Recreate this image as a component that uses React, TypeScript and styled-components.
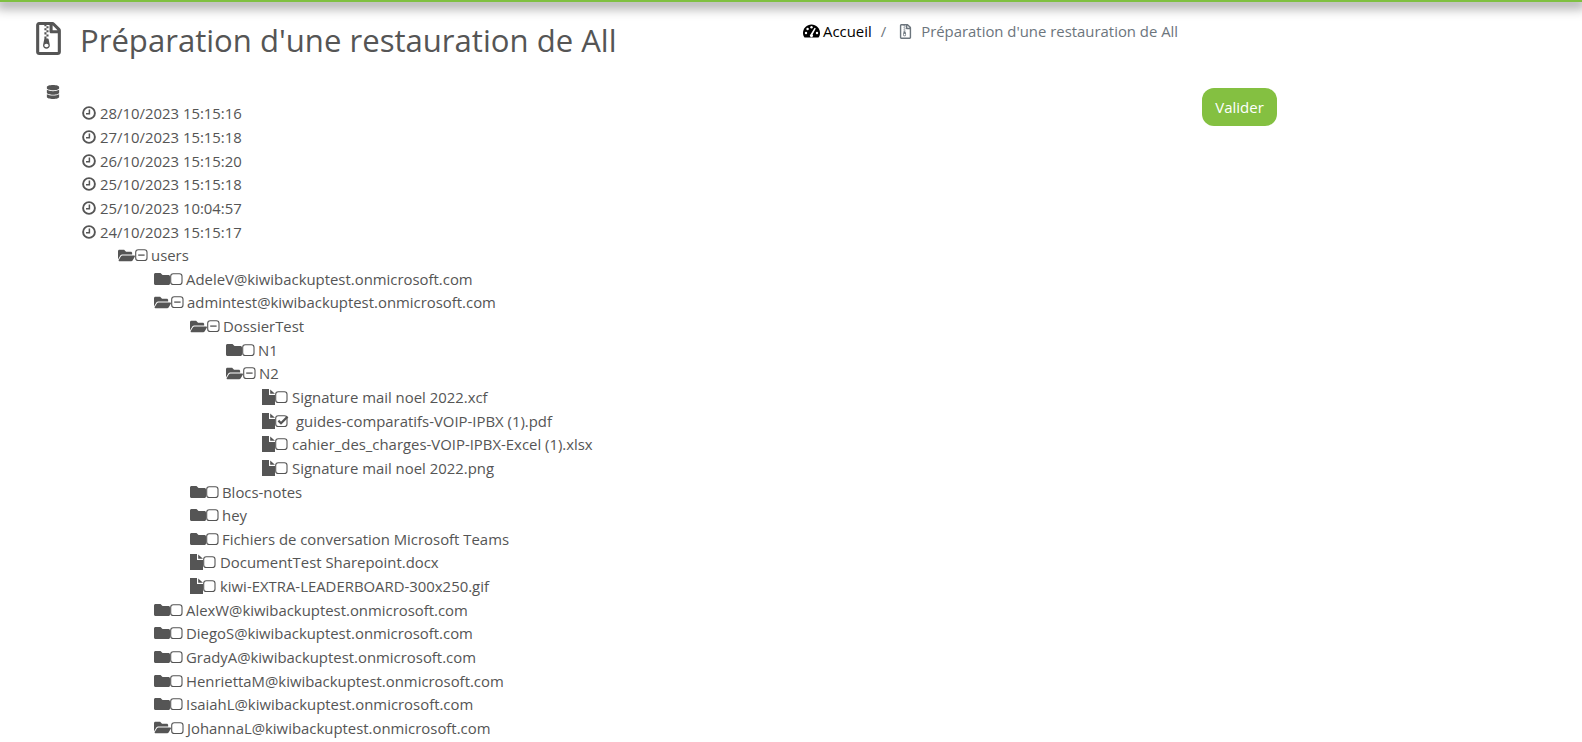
import React from "react";
import styled, { createGlobalStyle } from "styled-components";
import { FaDatabase, FaFolder, FaFolderOpen, FaRegFileArchive } from "react-icons/fa";

const GlobalStyle = createGlobalStyle`
  html, body {
    margin: 0;
    height: 100%;
    overflow: hidden;
    background: #fff;
    font-family: "Open Sans", "Liberation Sans", sans-serif;
    color: #555;
  }
`;

const TopBar = styled.div`
  height: 2px;
  background: #7fc041;
  box-shadow: 0 2px 12px 4px rgba(0, 0, 0, 0.38);
`;

const Header = styled.header`
  display: grid;
  grid-template-columns: 803px 1fr;
  padding-top: 20px;
  height: 61px;
`;

const TitleBlock = styled.div`
  display: flex;
  align-items: flex-start;
  padding-left: 35px;
  gap: 18px;
  color: #555;
  svg {
    width: 27px;
    height: 33px;
    flex: none;
  }
`;

const Title = styled.h1`
  margin: 1px 0 0;
  font-size: 31.1px;
  font-weight: 400;
  line-height: 34px;
`;

const Breadcrumb = styled.nav`
  display: flex;
  align-items: center;
  height: 18px;
  font-size: 14.9px;
  color: #6c757d;
`;

const HomeLink = styled.a`
  display: flex;
  align-items: center;
  gap: 3px;
  color: #000;
`;

const Separator = styled.span`
  margin: 0 12px 0 9px;
`;

const CrumbIcon = styled.span`
  display: flex;
  margin-right: 8px;
  color: #6c757d;
`;

const Main = styled.main`
  display: grid;
  grid-template-columns: 1202px 1fr;
`;

const TreeList = styled.ul<{ $root?: boolean }>`
  list-style: none;
  margin: 0;
  padding: 0 0 0 ${(p) => (p.$root ? 46 : 36)}px;
  font-size: 14.9px;
`;

const Row = styled.div<{ $root?: boolean }>`
  display: flex;
  align-items: center;
  height: ${(p) => (p.$root ? "18.5px" : "23.65px")};
  white-space: nowrap;
`;

const Icons = styled.span<{ $gap: number }>`
  display: inline-flex;
  align-items: center;
  margin-right: ${(p) => p.$gap}px;
  color: #555;
`;

const SubmitButton = styled.button`
  margin-top: 5px;
  width: 75px;
  height: 38px;
  border: none;
  border-radius: 12px;
  background: #84c041;
  color: #fff;
  font: inherit;
  font-size: 15px;
`;

const ClockIcon = () => (
  <svg width="14" height="14" viewBox="0 0 14 14" fill="none" stroke="currentColor">
    <circle cx="7" cy="7" r="5.9" strokeWidth="1.9" />
    <path d="M7.4 3.4V7.7H4" strokeWidth="1.5" />
  </svg>
);

const FileIcon = () => (
  <svg width="13" height="16" viewBox="0 0 13 16" fill="currentColor">
    <path d="M0 0H7V6H13V16H0Z" />
    <path d="M8.2 0.4L13 4.8H8.2Z" />
  </svg>
);

const GaugeIcon = () => (
  <svg width="17" height="14" viewBox="0 0 17 14">
    <path d="M8.5 0.5C3.8 0.5 0 4.3 0 9C0 10.8 0.5 12.3 1.5 13.5H15.5C16.5 12.3 17 10.8 17 9C17 4.3 13.2 0.5 8.5 0.5Z" fill="#000" />
    <g fill="#fff">
      <circle cx="3" cy="9" r="1.2" />
      <circle cx="4.6" cy="5" r="1.2" />
      <circle cx="8.5" cy="3.3" r="1.2" />
      <circle cx="14" cy="9" r="1.2" />
      <path d="M11.6 3.8L12.8 4.4L9.6 10.4A1.6 1.6 0 1 1 7.6 10.2Z" />
    </g>
  </svg>
);

const BoxIcon = ({ children, width = 13 }: { children?: React.ReactNode; width?: number }) => (
  <svg width={width} height="14" viewBox={`0 0 ${width} 14`} fill="none" stroke="currentColor">
    <rect x="0.7" y="1.7" width="11.3" height="10.8" rx="2.6" strokeWidth="1.1" />
    {children}
  </svg>
);

type Kind = "date" | "folder" | "open" | "file";
type Check = "none" | "empty" | "minus" | "check";

interface Node {
  label: string;
  kind: Kind;
  check: Check;
  children?: Node[];
}

const folder = (label: string): Node => ({ label, kind: "folder", check: "empty" });
const file = (label: string, check: Check = "empty"): Node => ({ label, kind: "file", check });
const date = (label: string, children?: Node[]): Node => ({ label, kind: "date", check: "none", children });

const tree: Node[] = [
  date("28/10/2023 15:15:16"),
  date("27/10/2023 15:15:18"),
  date("26/10/2023 15:15:20"),
  date("25/10/2023 15:15:18"),
  date("25/10/2023 10:04:57"),
  date("24/10/2023 15:15:17", [
    {
      label: "users",
      kind: "open",
      check: "minus",
      children: [
        folder("AdeleV@kiwibackuptest.onmicrosoft.com"),
        {
          label: "admintest@kiwibackuptest.onmicrosoft.com",
          kind: "open",
          check: "minus",
          children: [
            {
              label: "DossierTest",
              kind: "open",
              check: "minus",
              children: [
                folder("N1"),
                {
                  label: "N2",
                  kind: "open",
                  check: "minus",
                  children: [
                    file("Signature mail noel 2022.xcf"),
                    file("guides-comparatifs-VOIP-IPBX (1).pdf", "check"),
                    file("cahier_des_charges-VOIP-IPBX-Excel (1).xlsx"),
                    file("Signature mail noel 2022.png"),
                  ],
                },
              ],
            },
            folder("Blocs-notes"),
            folder("hey"),
            folder("Fichiers de conversation Microsoft Teams"),
            file("DocumentTest Sharepoint.docx"),
            file("kiwi-EXTRA-LEADERBOARD-300x250.gif"),
          ],
        },
        folder("AlexW@kiwibackuptest.onmicrosoft.com"),
        folder("DiegoS@kiwibackuptest.onmicrosoft.com"),
        folder("GradyA@kiwibackuptest.onmicrosoft.com"),
        folder("HenriettaM@kiwibackuptest.onmicrosoft.com"),
        folder("IsaiahL@kiwibackuptest.onmicrosoft.com"),
        { label: "JohannaL@kiwibackuptest.onmicrosoft.com", kind: "open", check: "empty" },
      ],
    },
  ]),
];

const KindIcon = ({ kind }: { kind: Kind }) => {
  if (kind === "date") return <ClockIcon />;
  if (kind === "folder") return <FaFolder size={16} />;
  if (kind === "open") return <FaFolderOpen size={17} />;
  return <FileIcon />;
};

const CheckIcon = ({ check }: { check: Check }) => {
  if (check === "minus")
    return (
      <BoxIcon>
        <path d="M3.2 7.1H9.6" strokeWidth="1.3" />
      </BoxIcon>
    );
  if (check === "check")
    return (
      <BoxIcon width={17}>
        <path d="M3.4 6.6L6 9.2L12.6 2.6" strokeWidth="2.2" />
      </BoxIcon>
    );
  if (check === "empty") return <BoxIcon />;
  return null;
};

const iconGap = (kind: Kind) => (kind === "folder" || kind === "open" ? 3 : 4);

const TreeItem = ({ node }: { node: Node }) => (
  <li>
    <Row>
      <Icons $gap={iconGap(node.kind)}>
        <KindIcon kind={node.kind} />
        <CheckIcon check={node.check} />
      </Icons>
      {node.label}
    </Row>
    {node.children && (
      <TreeList>
        {node.children.map((child) => (
          <TreeItem key={child.label} node={child} />
        ))}
      </TreeList>
    )}
  </li>
);

export default function App() {
  return (
    <>
      <GlobalStyle />
      <TopBar />
      <Header>
        <TitleBlock>
          <FaRegFileArchive />
          <Title>Préparation d'une restauration de All</Title>
        </TitleBlock>
        <Breadcrumb>
          <HomeLink>
            <GaugeIcon />
            Accueil
          </HomeLink>
          <Separator>/</Separator>
          <CrumbIcon>
            <FaRegFileArchive size={15} />
          </CrumbIcon>
          Préparation d'une restauration de All
        </Breadcrumb>
      </Header>
      <Main>
        <TreeList $root>
          <li>
            <Row $root>
              <Icons $gap={3}>
                <FaDatabase size={14} />
              </Icons>
            </Row>
            <TreeList>
              {tree.map((node) => (
                <TreeItem key={node.label} node={node} />
              ))}
            </TreeList>
          </li>
        </TreeList>
        <div>
          <SubmitButton>Valider</SubmitButton>
        </div>
      </Main>
    </>
  );
}
